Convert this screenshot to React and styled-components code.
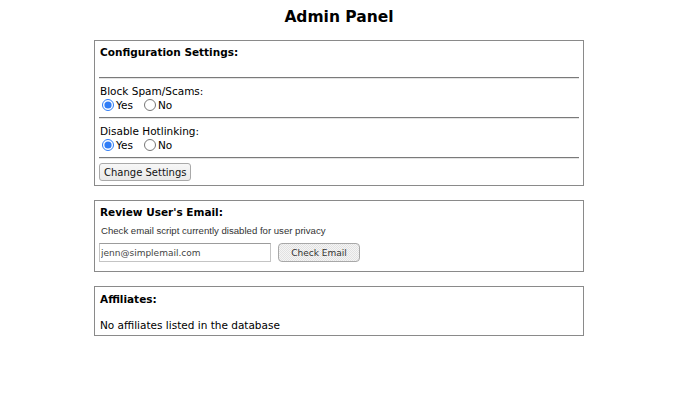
import React from 'react';
import styled, { createGlobalStyle } from 'styled-components';

const GlobalStyle = createGlobalStyle`
  html, body {
    margin: 0;
    padding: 0;
    background: #fff;
  }
  body {
    font-family: "DejaVu Sans", Verdana, sans-serif;
    color: #000;
  }
`;

const Page = styled.div`
  width: 490px;
  margin: 0 auto;
  padding: 7px 2px 0 0;
`;

const Title = styled.h1`
  margin: 0 0 13px;
  font-size: 15.5px;
  line-height: 20px;
  font-weight: bold;
  text-align: center;
`;

const Panel = styled.section`
  box-sizing: border-box;
  border: 1px solid #8a8a8a;
  padding: ${p => p.$pad || '4px'};
  margin-bottom: 14px;
`;

const Heading = styled.div`
  font-size: 10.5px;
  line-height: 14px;
  font-weight: bold;
  padding-left: 1px;
  margin-bottom: ${p => p.$gap || 0}px;
`;

const Divider = styled.hr`
  height: 0;
  margin: 0;
  border: 0;
  border-top: 1px solid #7a7a7a;
  border-bottom: 1px solid #e4e4e4;
`;

const Field = styled.div`
  padding: 5px 1px 5px;
`;

const Label = styled.div`
  font-size: 10.5px;
  line-height: 14px;
`;

const RadioRow = styled.div`
  display: flex;
  align-items: center;
  height: 14px;
  font-size: 10.5px;
`;

const Choice = styled.label`
  display: flex;
  align-items: center;
  margin-right: 9px;
`;

const Radio = styled.input.attrs({ type: 'radio' })`
  width: 12px;
  height: 12px;
  margin: 0 2px 0 2px;
  accent-color: #2f7cf6;
`;

const SettingsButton = styled.button`
  box-sizing: border-box;
  height: 18px;
  margin-top: 4px;
  padding: 0 4px;
  font-family: "DejaVu Sans", Verdana, sans-serif;
  font-size: 10px;
  color: #111;
  border: 1px solid #a9a9a9;
  border-radius: 3px;
  background: linear-gradient(#f7f7f7, #e9e9e9);
`;

const Hint = styled.div`
  margin-top: 7px;
  padding-left: 2px;
  font-family: "Liberation Sans", Arial, sans-serif;
  font-size: 9.6px;
  line-height: 10px;
  color: #333;
`;

const FormRow = styled.form`
  display: flex;
  align-items: center;
  gap: 7px;
  margin: 7px 0 5px;
`;

const EmailInput = styled.input`
  box-sizing: border-box;
  width: 172px;
  height: 19px;
  padding: 0 1px;
  font-family: "DejaVu Sans", Verdana, sans-serif;
  font-size: 9px;
  color: #444;
  border: 1px solid #c4c4c4;
  border-top-color: #9c9c9c;
  outline: none;
`;

const CheckButton = styled.button`
  box-sizing: border-box;
  width: 82px;
  height: 19px;
  padding: 0;
  font-family: "DejaVu Sans", Verdana, sans-serif;
  font-size: 9px;
  color: #333;
  border: 1px solid #a8a8a8;
  border-radius: 4px;
  background-color: #eeeeee;
  background-image: repeating-conic-gradient(#e2e2e2 0 25%, #f5f5f5 0 50%);
  background-size: 2px 2px;
`;

const BodyText = styled.div`
  margin-top: 12px;
  padding-left: 1px;
  font-size: 10.5px;
  line-height: 14px;
`;

function YesNo({ name }) {
  return (
    <RadioRow>
      <Choice>
        <Radio name={name} defaultChecked />
        Yes
      </Choice>
      <Choice>
        <Radio name={name} />
        No
      </Choice>
    </RadioRow>
  );
}

export default function App() {
  return (
    <>
      <GlobalStyle />
      <Page>
        <Title>Admin Panel</Title>

        <Panel>
          <Heading $gap={18}>Configuration Settings:</Heading>
          <Divider />
          <Field>
            <Label>Block Spam/Scams:</Label>
            <YesNo name="spam" />
          </Field>
          <Divider />
          <Field>
            <Label>Disable Hotlinking:</Label>
            <YesNo name="hotlink" />
          </Field>
          <Divider />
          <SettingsButton type="button">Change Settings</SettingsButton>
        </Panel>

        <Panel>
          <Heading>Review User's Email:</Heading>
          <Hint>Check email script currently disabled for user privacy</Hint>
          <FormRow onSubmit={e => e.preventDefault()}>
            <EmailInput defaultValue="jenn@simplemail.com" />
            <CheckButton type="button">Check Email</CheckButton>
          </FormRow>
        </Panel>

        <Panel $pad="5px 4px 3px">
          <Heading>Affiliates:</Heading>
          <BodyText>No affiliates listed in the database</BodyText>
        </Panel>
      </Page>
    </>
  );
}
